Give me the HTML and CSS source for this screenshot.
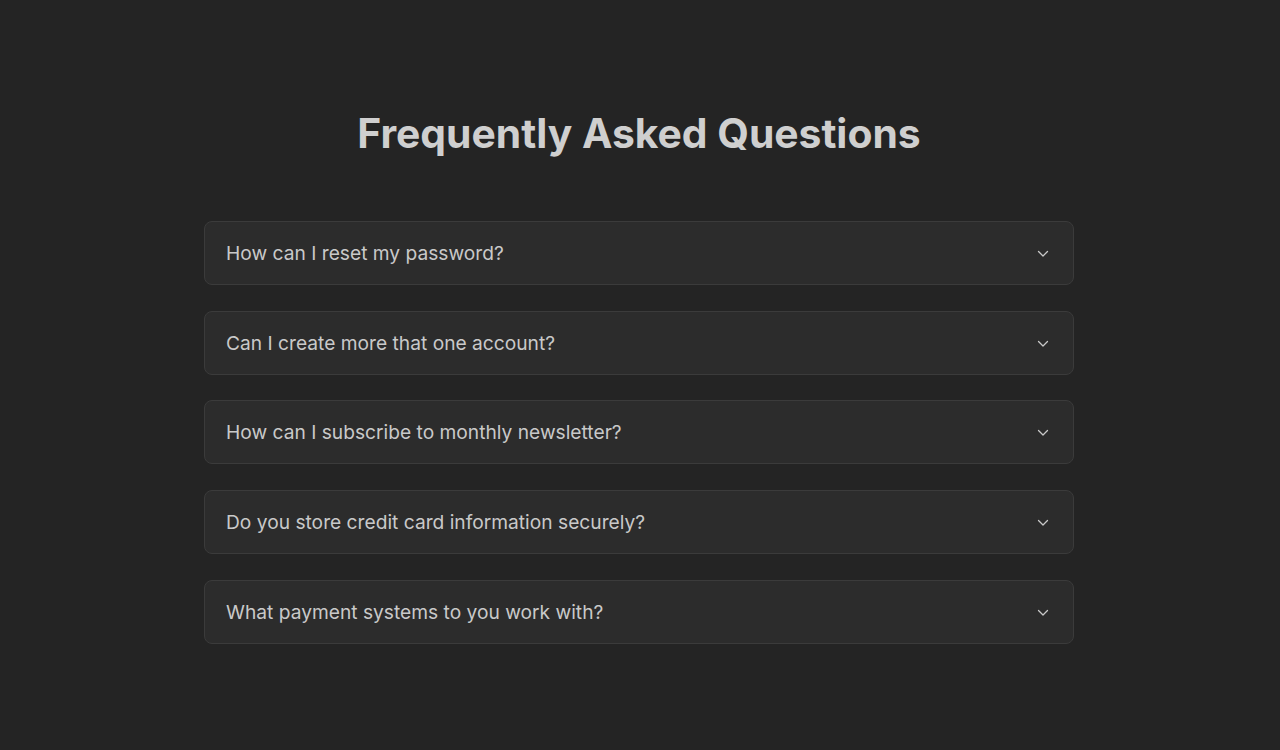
FILE: index.html
```html
<!DOCTYPE html>
<html lang="en">
<head>
<meta charset="utf-8">
<title>FAQ</title>
<link rel="stylesheet" href="styles.css">
</head>
<body>
<main class="faq">
  <h1 class="faq-title">Frequently Asked Questions</h1>
  <div class="faq-list">
    <div class="faq-item"><span class="faq-q">How can I reset my password?</span><svg class="chev" viewBox="0 0 12 8" width="12" height="8"><path d="M1.5 1.5 6 6l4.5-4.5" fill="none" stroke="currentColor" stroke-width="1.3" stroke-linecap="round" stroke-linejoin="round"/></svg></div>
    <div class="faq-item"><span class="faq-q">Can I create more that one account?</span><svg class="chev" viewBox="0 0 12 8" width="12" height="8"><path d="M1.5 1.5 6 6l4.5-4.5" fill="none" stroke="currentColor" stroke-width="1.3" stroke-linecap="round" stroke-linejoin="round"/></svg></div>
    <div class="faq-item"><span class="faq-q">How can I subscribe to monthly newsletter?</span><svg class="chev" viewBox="0 0 12 8" width="12" height="8"><path d="M1.5 1.5 6 6l4.5-4.5" fill="none" stroke="currentColor" stroke-width="1.3" stroke-linecap="round" stroke-linejoin="round"/></svg></div>
    <div class="faq-item"><span class="faq-q">Do you store credit card information securely?</span><svg class="chev" viewBox="0 0 12 8" width="12" height="8"><path d="M1.5 1.5 6 6l4.5-4.5" fill="none" stroke="currentColor" stroke-width="1.3" stroke-linecap="round" stroke-linejoin="round"/></svg></div>
    <div class="faq-item"><span class="faq-q">What payment systems to you work with?</span><svg class="chev" viewBox="0 0 12 8" width="12" height="8"><path d="M1.5 1.5 6 6l4.5-4.5" fill="none" stroke="currentColor" stroke-width="1.3" stroke-linecap="round" stroke-linejoin="round"/></svg></div>
  </div>
</main>
</body>
</html>
```

FILE: styles.css
```css
html, body {
  margin: 0;
  padding: 0;
  background: #242424;
  height: 100%;
}
body {
  font-family: Inter, "Noto Sans", sans-serif;
  color: #cfcfcf;
}
.faq {
  width: 870px;
  margin-left: calc(50% - 436px);
  padding-top: 107px;
}
.faq-title {
  margin: 0 0 62px;
  text-align: center;
  font-size: 40.8px;
  font-weight: 700;
  line-height: 52px;
  letter-spacing: 0;
  color: #cfcfcf;
}
.faq-list {
  display: flex;
  flex-direction: column;
  gap: 25.7px;
}
.faq-item {
  box-sizing: border-box;
  height: 64px;
  display: flex;
  align-items: center;
  justify-content: space-between;
  padding: 2px 24px 0 21px;
  background: #2c2c2c;
  border: 1px solid #3b3b3b;
  border-radius: 8px;
}
.faq-q {
  font-size: 19.2px;
  line-height: 24px;
  margin-top: -2px;
  color: #c9c9c9;
}
.chev {
  color: #c9c9c9;
}
```
